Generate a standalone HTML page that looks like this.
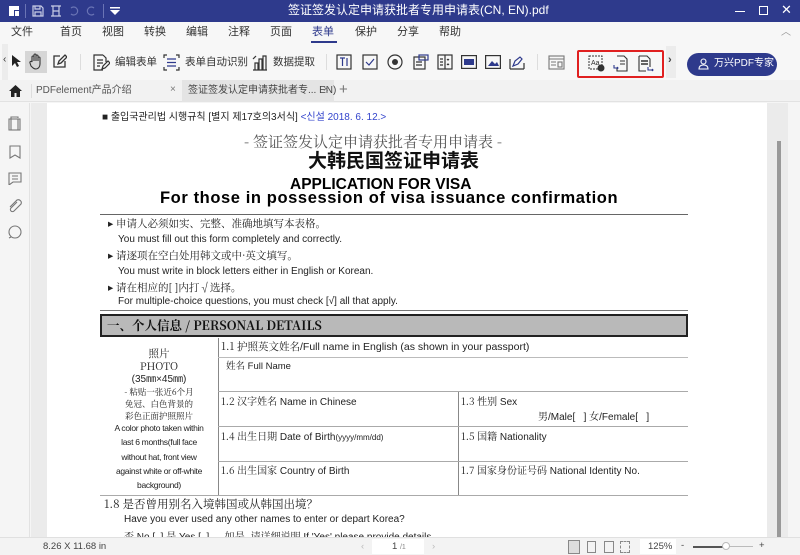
<!DOCTYPE html>
<html><head><meta charset="utf-8">
<style>
*{margin:0;padding:0;box-sizing:border-box}
body{width:800px;height:555px;overflow:hidden;background:#f5f5f5;font-family:"Liberation Sans","Noto Sans CJK SC",sans-serif;position:relative;color:#333}
.a{position:absolute;white-space:nowrap;line-height:1.2}
.title{left:0;top:0;width:800px;height:22px;background:#2e3a8c;color:#fff;font-size:12px}
.menu{left:0;top:22px;width:800px;height:22px;background:#f7f7f7;font-size:11px;color:#333}
.tb{left:0;top:44px;width:800px;height:36px;background:#f7f7f7;font-size:10px;color:#333}
.tabs{left:0;top:80px;width:800px;height:22px;background:#f2f2f2;font-size:10px;color:#555;border-bottom:1px solid #e2e2e2}
svg{position:absolute}
.doc{font-family:"Liberation Sans","Noto Sans CJK SC",sans-serif;color:#222}
.cjk{font-family:"Noto Serif CJK SC","Noto Sans CJK SC",serif}
.ln{position:absolute;background:#888}
.pc{position:absolute;left:100px;width:118px;text-align:center;line-height:1;white-space:nowrap}
</style></head><body>
<div class="a title">
 <svg style="left:8px;top:5px" width="12" height="12" viewBox="0 0 12 12"><path d="M1 1h10v4H6v6H1z" fill="#fff"/><rect x="7" y="6" width="4" height="5" fill="#fff"/></svg>
 <div class="a" style="left:25px;top:4px;width:1px;height:14px;background:#6a74b5"></div>
 <svg style="left:32px;top:5px" width="12" height="12" viewBox="0 0 12 12" fill="none" stroke="#c9cde6" stroke-width="1.2"><path d="M1 1h8l2 2v8H1z M3 1v3h5V1 M3 11V7h6v4"/></svg>
 <svg style="left:50px;top:5px" width="12" height="12" viewBox="0 0 12 12" fill="none" stroke="#c9cde6" stroke-width="1.2"><path d="M1 1h10M1 11h10M3 1v10M9 1v10M3 6h6"/></svg>
 <svg style="left:69px;top:6px" width="10" height="10" viewBox="0 0 10 10" fill="none" stroke="#6a74b5" stroke-width="1.2"><path d="M2 2a4 4 0 1 1 0 6"/></svg>
 <svg style="left:86px;top:6px" width="10" height="10" viewBox="0 0 10 10" fill="none" stroke="#6a74b5" stroke-width="1.2"><path d="M8 2a4 4 0 1 0 0 6"/></svg>
 <div class="a" style="left:103px;top:4px;width:1px;height:14px;background:#6a74b5"></div>
 <svg style="left:110px;top:7px" width="10" height="8" viewBox="0 0 10 8"><rect x="0" y="0" width="10" height="1.5" fill="#fff"/><path d="M0 3h10L5 8z" fill="#fff"/></svg>
 <div class="a" style="left:288px;top:3px;font-size:12px">签证签发认定申请获批者专用申请表(CN, EN).pdf</div>
 <div class="a" style="left:735px;top:11px;width:10px;height:1px;background:#fff"></div>
 <div class="a" style="left:759px;top:6px;width:9px;height:9px;border:1px solid #fff"></div>
 <div class="a" style="left:781px;top:2px;font-size:13px;color:#fff">✕</div>
</div>
<div class="a menu">
 <span class="a" style="left:11px;top:4px">文件</span>
 <span class="a" style="left:60px;top:4px">首页</span>
 <span class="a" style="left:102px;top:4px">视图</span>
 <span class="a" style="left:144px;top:4px">转换</span>
 <span class="a" style="left:186px;top:4px">编辑</span>
 <span class="a" style="left:228px;top:4px">注释</span>
 <span class="a" style="left:270px;top:4px">页面</span>
 <span class="a" style="left:312px;top:4px;color:#2e3a8c">表单</span>
 <div class="a" style="left:311px;top:19px;width:26px;height:2px;background:#2e3a8c"></div>
 <span class="a" style="left:355px;top:4px">保护</span>
 <span class="a" style="left:397px;top:4px">分享</span>
 <span class="a" style="left:439px;top:4px">帮助</span>
 <span class="a" style="left:781px;top:5px;color:#999;font-size:10px">︿</span>
</div>
<div class="a tb">
 <div class="a" style="left:2px;top:0;width:6px;height:36px;background:#ececec"></div>
 <span class="a" style="left:3px;top:10px;font-size:10px;color:#333">‹</span>
 <svg style="left:10px;top:10px" width="12" height="14" viewBox="0 0 12 14"><path d="M2 1v11l3-3 2 4 2-1-2-4h4z" fill="#222"/></svg>
 <div class="a" style="left:25px;top:7px;width:22px;height:22px;background:#d6d6d6"></div>
 <svg style="left:28px;top:9px" width="16" height="17" viewBox="0 0 16 17" fill="none" stroke="#333" stroke-width="1.1"><path d="M4 9V4a1 1 0 0 1 2 0v4V2a1 1 0 0 1 2 0v6V3a1 1 0 0 1 2 0v5V5a1 1 0 0 1 2 0v6c0 3-2 5-4 5s-3-1-5-3L2 10a1 1 0 0 1 2-1z"/></svg>
 <svg style="left:52px;top:10px" width="15" height="15" viewBox="0 0 15 15" fill="none" stroke="#333" stroke-width="1.3"><path d="M8 2H2v11h11V7"/><path d="M6 10l1-3 6-6 2 2-6 6z"/></svg>
 <div class="a" style="left:80px;top:10px;width:1px;height:16px;background:#ddd"></div>
 <svg style="left:92px;top:10px" width="18" height="17" viewBox="0 0 18 17" fill="none" stroke="#333" stroke-width="1.2"><path d="M11 1H2v15h9M11 1l3 3v4"/><path d="M5 6h6M5 9h6M5 12h3"/><path d="M10 15l1-3 5-5 2 2-5 5z"/></svg>
 <span class="a" style="left:115px;top:12px;font-size:10.5px">编辑表单</span>
 <svg style="left:163px;top:10px" width="17" height="17" viewBox="0 0 17 17" fill="none" stroke="#333" stroke-width="1.2"><path d="M1 4V1h3M13 1h3v3M16 13v3h-3M4 16H1v-3"/><path d="M4 5h9M4 8.5h9M4 12h9" stroke="#2e3a8c"/></svg>
 <span class="a" style="left:185px;top:12px;font-size:10.5px">表单自动识别</span>
 <svg style="left:252px;top:10px" width="16" height="17" viewBox="0 0 16 17" fill="none" stroke="#333" stroke-width="1.2"><path d="M1 16h14M3 16V9h3v7M7 16V5h3v11M11 16V2h3v14"/><path d="M1 5l3-3"/></svg>
 <span class="a" style="left:273px;top:12px;font-size:10.5px">数据提取</span>
 <div class="a" style="left:326px;top:10px;width:1px;height:16px;background:#ddd"></div>
 <svg style="left:336px;top:10px" width="16" height="16" viewBox="0 0 16 16" fill="none" stroke="#333" stroke-width="1.2"><rect x="1" y="1" width="14" height="14"/><path d="M4 4h5M6.5 4v8M11 4v8" stroke="#2e3a8c"/></svg>
 <svg style="left:362px;top:10px" width="16" height="16" viewBox="0 0 16 16" fill="none" stroke="#333" stroke-width="1.2"><rect x="1" y="1" width="14" height="14"/><path d="M4 8l3 3 5-6" stroke="#2e3a8c"/></svg>
 <svg style="left:387px;top:10px" width="16" height="16" viewBox="0 0 16 16"><circle cx="8" cy="8" r="7" fill="none" stroke="#333" stroke-width="1.2"/><circle cx="8" cy="8" r="3" fill="#333"/></svg>
 <svg style="left:413px;top:10px" width="16" height="16" viewBox="0 0 16 16" fill="none" stroke="#333" stroke-width="1.2"><rect x="1" y="3" width="11" height="12"/><rect x="6" y="1" width="9" height="5" stroke="#2e3a8c"/><path d="M3 8h6M3 11h6"/></svg>
 <svg style="left:437px;top:10px" width="16" height="16" viewBox="0 0 16 16" fill="none" stroke="#333" stroke-width="1.2"><rect x="1" y="1" width="14" height="14"/><path d="M8 1v14M3 5h3M3 8h3M3 11h3M10 5l1 1 1-1M10 11l1-1 1 1"/></svg>
 <svg style="left:461px;top:11px" width="16" height="14" viewBox="0 0 16 14"><rect x="0.6" y="0.6" width="14.8" height="12.8" fill="none" stroke="#333" stroke-width="1.2"/><rect x="3" y="4" width="10" height="6" fill="#2e3a8c"/></svg>
 <svg style="left:485px;top:11px" width="16" height="14" viewBox="0 0 16 14"><rect x="0.6" y="0.6" width="14.8" height="12.8" fill="none" stroke="#333" stroke-width="1.2"/><path d="M3 11l4-5 3 3 2-2 2 4z" fill="#2e3a8c"/></svg>
 <svg style="left:509px;top:10px" width="16" height="16" viewBox="0 0 16 16" fill="none" stroke="#333" stroke-width="1.2"><path d="M1 15h14M1 15V5M15 15V9"/><path d="M4 12l2-5 5-4 2 2-4 5z" stroke="#2e3a8c"/></svg>
 <div class="a" style="left:537px;top:10px;width:1px;height:16px;background:#ddd"></div>
 <svg style="left:548px;top:11px" width="17" height="15" viewBox="0 0 17 15" fill="none" stroke="#777" stroke-width="1.1"><rect x="1" y="1" width="15" height="13"/><path d="M1 4h15M3 7h5M3 10h5"/><rect x="10" y="7" width="4" height="5"/></svg>
 <div class="a" style="left:577px;top:6px;width:87px;height:28px;border:2px solid #e02020;border-radius:2px"></div>
 <svg style="left:588px;top:11px" width="17" height="17" viewBox="0 0 17 17" fill="none" stroke="#333" stroke-width="1"><rect x="1" y="1" width="13" height="13" stroke-dasharray="2 1"/><text x="3" y="10" font-size="7" fill="#333" stroke="none" font-family="Liberation Sans">Aa</text><circle cx="13" cy="13" r="3" fill="#333"/></svg>
 <svg style="left:613px;top:11px" width="16" height="17" viewBox="0 0 16 17" fill="none" stroke="#333" stroke-width="1.1"><path d="M4 1h7l3 3v12H4v-3"/><path d="M7 6h5M7 9h5"/><path d="M1 10v3h4M4 12l1 1-1 1" stroke="#2e3a8c"/></svg>
 <svg style="left:638px;top:11px" width="16" height="17" viewBox="0 0 16 17" fill="none" stroke="#333" stroke-width="1.1"><path d="M1 1h8l3 3v8M1 1v15h7"/><path d="M3 6h7M3 9h7" stroke-width="1.6"/><path d="M10 12v3h5M14 14l1 1-1 1" stroke="#2e3a8c"/></svg>
 <div class="a" style="left:666px;top:2px;width:10px;height:32px;background:#ececec"></div>
 <span class="a" style="left:668px;top:10px;font-size:11px;color:#444;font-weight:bold">›</span>
 <div class="a" style="left:687px;top:9px;width:90px;height:23px;background:#2e3a8c;border-radius:12px;color:#fff;font-size:10px;padding:5px 0 0 27px">万兴PDF专家</div>
 <svg style="left:698px;top:14px" width="11" height="12" viewBox="0 0 11 12" fill="none" stroke="#fff" stroke-width="1.1"><circle cx="5.5" cy="3.5" r="2.5"/><path d="M1 11c0-3 2-4 4.5-4s4.5 1 4.5 4z"/></svg>
</div>
<div class="a tabs">
 <svg style="left:9px;top:5px" width="13" height="12" viewBox="0 0 13 12"><path d="M6.5 0L0 6h2v6h3.5V8h2v4H11V6h2z" fill="#222"/></svg>
 <div class="a" style="left:31px;top:4px;width:1px;height:14px;background:#ddd"></div>
 <span class="a" style="left:36px;top:5px">PDFelement产品介绍</span>
 <span class="a" style="left:170px;top:4px;color:#777">×</span>
 <div class="a" style="left:182px;top:0;width:152px;height:22px;background:#e4e4e4"></div>
 <span class="a" style="left:188px;top:5px;color:#444">签证签发认定申请获批者专... EN)</span>
 <span class="a" style="left:323px;top:4px;color:#777">×</span>
 <span class="a" style="left:339px;top:1px;font-size:15px;color:#777">+</span>
</div>
<div class="a" style="left:0;top:103px;width:30px;height:434px;background:#f5f5f5;border-right:1px solid #e2e2e2"></div>
<svg style="left:8px;top:116px" width="14" height="15" viewBox="0 0 14 15" fill="none" stroke="#777" stroke-width="1.1"><path d="M3 3V1h7v1M1 3h9v11H1z"/><rect x="3" y="3" width="9" height="11"/></svg>
<svg style="left:9px;top:145px" width="12" height="14" viewBox="0 0 12 14" fill="none" stroke="#777" stroke-width="1.1"><path d="M1 1h10v12L6 10l-5 3z"/></svg>
<svg style="left:8px;top:172px" width="14" height="13" viewBox="0 0 14 13" fill="none" stroke="#777" stroke-width="1.1"><path d="M1 1h12v9H5l-4 3z M4 4h6M4 7h6"/></svg>
<svg style="left:8px;top:199px" width="14" height="14" viewBox="0 0 14 14" fill="none" stroke="#777" stroke-width="1.1"><path d="M9 3L3 9a2 2 0 0 0 3 3l7-7a3 3 0 0 0-4-4L2 8"/></svg>
<svg style="left:8px;top:225px" width="14" height="14" viewBox="0 0 14 14" fill="none" stroke="#777" stroke-width="1.1"><circle cx="7" cy="7" r="6"/><path d="M3 12L1 13"/></svg>
<span class="a" style="left:32px;top:313px;font-size:7px;color:#aaa">›</span>
<div class="a" style="left:31px;top:103px;width:16px;height:434px;background:#ebebeb"></div>
<div class="a" style="left:47px;top:103px;width:720px;height:434px;background:#fff"></div>
<div class="a" style="left:767px;top:103px;width:21px;height:434px;background:#ebebeb"></div>
<div class="a" style="left:777px;top:141px;width:4px;height:396px;background:#999"></div>
<div class="doc">
 <div class="a" style="left:102px;top:112px;font-size:10px;font-family:'Liberation Sans','Noto Sans CJK KR',sans-serif">■ 출입국관리법 시행규칙 [별지 제17호의3서식] <span style="color:#3344cc">&lt;신설 2018. 6. 12.&gt;</span></div>
 <div class="a cjk" style="left:244px;top:133px;font-size:15px;color:#555">- 签证签发认定申请获批者专用申请表 -</div>
 <div class="a" style="left:308px;top:150px;font-size:19px;font-weight:bold;font-family:'Noto Sans CJK SC',sans-serif;color:#111;line-height:1.1">大韩民国签证申请表</div>
 <div class="a" style="left:290px;top:176px;font-size:15.5px;font-weight:bold;color:#000">APPLICATION FOR VISA</div>
 <div class="a" style="left:160px;top:189px;font-size:16.5px;font-weight:bold;color:#000;letter-spacing:0.6px">For those in possession of visa issuance confirmation</div>
 <div class="ln" style="left:100px;top:214px;width:588px;height:1px;background:#666"></div>
 <div class="a cjk" style="left:108px;top:217px;font-size:10.5px;line-height:14px">▸ 申请人必须如实、完整、准确地填写本表格。</div>
 <div class="a" style="left:118px;top:234px;font-size:10px">You must fill out this form completely and correctly.</div>
 <div class="a cjk" style="left:108px;top:249px;font-size:10.5px;line-height:14px">▸ 请逐项在空白处用韩文或中·英文填写。</div>
 <div class="a" style="left:118px;top:266px;font-size:10px">You must write in block letters either in English or Korean.</div>
 <div class="a cjk" style="left:108px;top:281px;font-size:10.5px;line-height:14px">▸ 请在相应的[ ]内打√选择。</div>
 <div class="a" style="left:118px;top:296px;font-size:10px">For multiple-choice questions, you must check [√] all that apply.</div>
 <div class="ln" style="left:100px;top:310px;width:588px;height:1px;background:#777"></div>
 <div class="a" style="left:100px;top:314px;width:588px;height:23px;background:#b9b9b9;border:2px solid #222"></div>
 <div class="a cjk" style="left:107px;top:316px;font-size:12.5px;font-weight:bold;color:#111;line-height:18px">一、个人信息 / PERSONAL DETAILS</div>
 <div class="ln" style="left:218px;top:338px;width:1px;height:158px"></div>
 <div class="ln" style="left:458px;top:391px;width:1px;height:105px"></div>
 <div class="ln" style="left:218px;top:357px;width:470px;height:1px;background:#bbb"></div>
 <div class="ln" style="left:218px;top:391px;width:470px;height:1px;background:#aaa"></div>
 <div class="ln" style="left:218px;top:426px;width:470px;height:1px;background:#aaa"></div>
 <div class="ln" style="left:218px;top:461px;width:470px;height:1px;background:#aaa"></div>
 <div class="ln" style="left:100px;top:495px;width:588px;height:1px;background:#aaa"></div>
 <div class="pc cjk" style="top:349px;font-size:10.5px">照片</div>
 <div class="pc cjk" style="top:362px;font-size:10.5px">PHOTO</div>
 <div class="pc" style="top:375px;font-size:10px">(35㎜×45㎜)</div>
 <div class="pc cjk" style="top:388px;font-size:8.5px">- 粘贴一张近6个月</div>
 <div class="pc cjk" style="top:400px;font-size:8.5px">免冠、白色背景的</div>
 <div class="pc cjk" style="top:412px;font-size:8.5px">彩色正面护照照片</div>
 <div class="pc" style="top:424px;font-size:8.5px;letter-spacing:-0.3px">A color photo taken within</div>
 <div class="pc" style="top:438px;font-size:8.5px;letter-spacing:-0.3px">last 6 months(full face</div>
 <div class="pc" style="top:453px;font-size:8.5px;letter-spacing:-0.3px">without hat, front view</div>
 <div class="pc" style="top:467px;font-size:8.5px;letter-spacing:-0.3px">against white or off-white</div>
 <div class="pc" style="top:481px;font-size:8.5px;letter-spacing:-0.3px">background)</div>
 <div class="a" style="left:221px;top:341px;font-size:10.5px"><span class="cjk">1.1 护照英文姓名</span>/Full name in English (as shown in your passport)</div>
 <div class="a" style="left:226px;top:360px;font-size:9.5px"><span class="cjk">姓名</span> Full Name</div>
 <div class="a" style="left:221px;top:395px;font-size:10px"><span class="cjk">1.2 汉字姓名</span> Name in Chinese</div>
 <div class="a" style="left:461px;top:395px;font-size:10px"><span class="cjk">1.3 性别</span> Sex</div>
 <div class="a" style="left:538px;top:410px;font-size:10px"><span class="cjk">男</span>/Male[&nbsp;&nbsp;&nbsp;] <span class="cjk">女</span>/Female[&nbsp;&nbsp;&nbsp;]</div>
 <div class="a" style="left:221px;top:430px;font-size:10px"><span class="cjk">1.4 出生日期</span> Date of Birth<span style="font-size:8px">(yyyy/mm/dd)</span></div>
 <div class="a" style="left:461px;top:430px;font-size:10px"><span class="cjk">1.5 国籍</span> Nationality</div>
 <div class="a" style="left:221px;top:464px;font-size:10px"><span class="cjk">1.6 出生国家</span> Country of Birth</div>
 <div class="a" style="left:461px;top:464px;font-size:10px"><span class="cjk">1.7 国家身份证号码</span> National Identity No.</div>
 <div class="a cjk" style="left:104px;top:498px;font-size:11.5px">1.8 是否曾用别名入境韩国或从韩国出境？</div>
 <div class="a" style="left:124px;top:514px;font-size:10px">Have you ever used any other names to enter or depart Korea?</div>
 <div class="a" style="left:124px;top:530px;font-size:10px"><span class="cjk">否</span> No [&nbsp;&nbsp;] <span class="cjk">是</span> Yes [&nbsp;&nbsp;] → <span class="cjk">如是, 请详细说明</span> If 'Yes' please provide details</div>
</div>
<div class="a" style="left:0;top:537px;width:800px;height:18px;background:#f3f3f3;border-top:1px solid #e0e0e0;font-size:9.5px;color:#444">
 <span class="a" style="left:43px;top:3px">8.26 X 11.68 in</span>
 <span class="a" style="left:361px;top:3px;color:#bbb">‹</span>
 <div class="a" style="left:372px;top:1px;width:52px;height:15px;background:#fff"></div>
 <span class="a" style="left:392px;top:3px">1 <span style="font-size:7px;color:#888">/1</span></span>
 <span class="a" style="left:432px;top:3px;color:#bbb">›</span>
 <div class="a" style="left:568px;top:2px;width:12px;height:14px;background:#ddd;border:1px solid #888"></div>
 <div class="a" style="left:587px;top:3px;width:9px;height:12px;border:1px solid #888"></div>
 <div class="a" style="left:604px;top:3px;width:10px;height:12px;border:1px solid #888"></div>
 <div class="a" style="left:620px;top:3px;width:10px;height:12px;border:1px dashed #888"></div>
 <div class="a" style="left:640px;top:1px;width:36px;height:15px;background:#fff"></div>
 <span class="a" style="left:648px;top:3px">125%</span>
 <span class="a" style="left:681px;top:2px">-</span>
 <div class="a" style="left:693px;top:8px;width:30px;height:2px;background:#555"></div>
 <div class="a" style="left:723px;top:8px;width:30px;height:1px;background:#bbb"></div>
 <div class="a" style="left:722px;top:4px;width:8px;height:8px;border-radius:4px;background:#fff;border:1px solid #bbb"></div>
 <span class="a" style="left:759px;top:2px">+</span>
</div>
</body></html>
